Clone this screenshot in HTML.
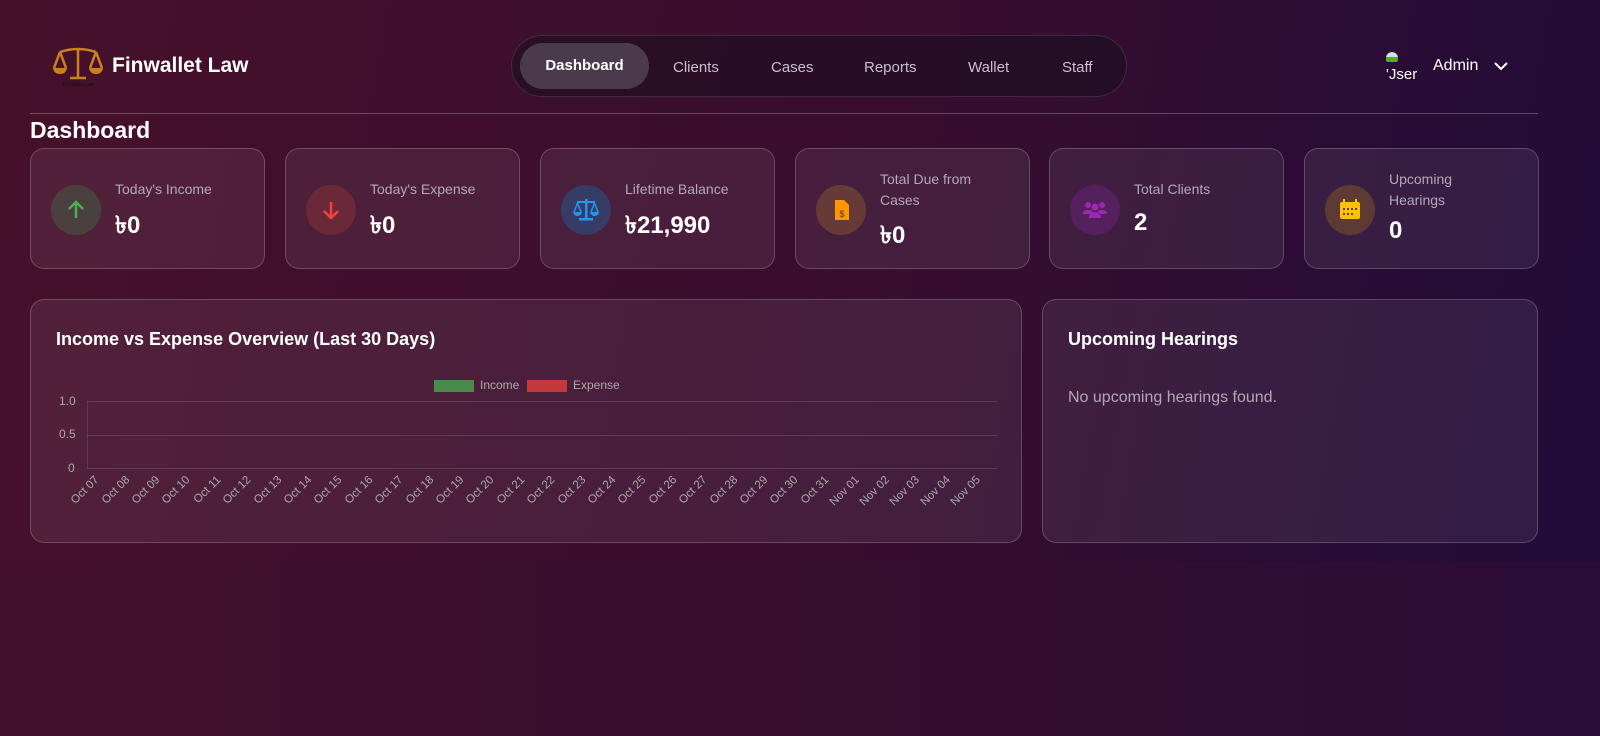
<!DOCTYPE html>
<html><head><meta charset="utf-8"><style>
*{box-sizing:border-box;margin:0;padding:0}
html,body{width:1600px;height:736px;overflow:hidden;font-family:"Liberation Sans",sans-serif;background:linear-gradient(90deg,#43102a,#2a0c36);}
.wrap{position:absolute;left:0;top:0;width:1600px;height:562px;background:linear-gradient(100deg,#461029 0%,#3a0d2f 50%,#210c38 100%);}
.logo{position:absolute;left:52px;top:44px}
.brand{position:absolute;left:112px;top:54px;color:#fff;font-weight:bold;font-size:21px}
.nav{position:absolute;left:511px;top:35px;width:616px;height:62px;border-radius:31px;background:rgba(25,15,30,.55);border:1px solid rgba(255,255,255,.12)}
.nav span{position:absolute;top:23px;color:#c9bfcf;font-size:15px}
.nav .act{left:8px;top:7px;width:129px;height:46px;border-radius:23px;background:#4a3a4c;color:#fff;font-weight:bold;text-align:center;line-height:46px}
.hr{position:absolute;left:30px;top:113px;width:1508px;height:1px;background:rgba(255,255,255,.25)}
h1{position:absolute;left:30px;top:117px;color:#fff;font-size:23px}
.card{position:absolute;top:148px;width:235px;height:121px;border-radius:14px;background:rgba(255,255,255,.07);border:1px solid rgba(255,255,255,.2)}
.ic{position:absolute;left:20px;top:36px;width:50px;height:50px;border-radius:25px}
.lb{position:absolute;left:84px;color:#b4a8b6;font-size:14px;line-height:21px}
.val{position:absolute;left:84px;color:#fff;font-weight:bold;font-size:24px}
.panel{position:absolute;top:299px;height:244px;border-radius:14px;background:rgba(255,255,255,.07);border:1px solid rgba(255,255,255,.2)}
.pt{position:absolute;left:25px;top:29px;color:#fff;font-size:18px;font-weight:bold}
.ax{position:absolute;color:#aaa;font-size:12px}
.xl{position:absolute;color:#aaa;font-size:11.5px;transform-origin:right top;transform:rotate(-45deg);white-space:nowrap}
</style></head><body>
<div class="wrap">
<svg class="logo" width="52" height="44" viewBox="0 0 52 44"><g stroke="#c9801f" stroke-width="2.5" fill="none"><path d="M26 4V34M8 8Q26 2 44 8M8 8 2 24M8 8 14 24M44 8 38 24M44 8 50 24M18 34H34"/></g><path d="M1 24h14q-1 6-7 6t-7-6zM37 24h14q-1 6-7 6t-7-6z" fill="#c9801f"/><text x="26" y="42" font-size="5" fill="#111" text-anchor="middle" font-family="Liberation Sans">FinWallet Law</text></svg>
<div class="brand">Finwallet Law</div>
<div class="nav"><span class="act">Dashboard</span><span style="left:161px">Clients</span><span style="left:259px">Cases</span><span style="left:352px">Reports</span><span style="left:456px">Wallet</span><span style="left:550px">Staff</span></div>
<div style="position:absolute;left:1386px;top:52px;width:12px;height:10px;border-radius:6px 6px 2px 2px;background:linear-gradient(#ddd 50%,#5a3 50%)"></div>
<div style="position:absolute;left:1386px;top:66px;color:#fff;font-size:15px">'Jser</div>
<div style="position:absolute;left:1433px;top:57px;color:#fff;font-size:16px">Admin</div>
<svg style="position:absolute;left:1494px;top:61px" width="14" height="10"><path d="M1 2l6 6 6-6" stroke="#fff" stroke-width="2" fill="none"/></svg>
<div class="hr"></div>
<h1>Dashboard</h1>

<div class="card" style="left:30px"><div class="ic" style="background:#4a4040"><svg width="50" height="50"><path d="M25 33V17M18 24l7-7 7 7" stroke="#4caf50" stroke-width="2.5" fill="none"/></svg></div><div class="lb" style="top:30px">Today's Income</div><div class="val" style="top:58px">৳0</div></div>
<div class="card" style="left:285px"><div class="ic" style="background:#6a2838"><svg width="50" height="50"><path d="M25 17V33M18 26l7 7 7-7" stroke="#f44336" stroke-width="2.5" fill="none"/></svg></div><div class="lb" style="top:30px">Today's Expense</div><div class="val" style="top:58px">৳0</div></div>
<div class="card" style="left:540px"><div class="ic" style="background:#363c66"><svg width="50" height="50" fill="#2196f3"><rect x="24" y="14" width="2.5" height="20"/><rect x="16" y="16" width="18" height="2"/><rect x="18" y="33" width="14" height="2.5"/><path d="M12 27h9q-1 4-4.5 4T12 27zM29 27h9q-1 4-4.5 4T29 27z"/><path d="M16.5 18 13 27M16.5 18 20 27M33.5 18 30 27M33.5 18 37 27" stroke="#2196f3" stroke-width="1.5"/></svg></div><div class="lb" style="top:30px">Lifetime Balance</div><div class="val" style="top:58px">৳21,990</div></div>
<div class="card" style="left:795px"><div class="ic" style="background:#663a36"><svg width="50" height="50"><path d="M19 15h9l5 5v15h-14z" fill="#ff9800"/><text x="26" y="32" font-size="9" fill="#5a2a10" text-anchor="middle" font-family="Liberation Sans">$</text></svg></div><div class="lb" style="top:20px">Total Due from<br>Cases</div><div class="val" style="top:68px">৳0</div></div>
<div class="card" style="left:1049px"><div class="ic" style="background:#55205e"><svg width="50" height="50" fill="#9c27b0"><circle cx="18" cy="20" r="3"/><circle cx="32" cy="20" r="3"/><circle cx="25" cy="22" r="3.5"/><path d="M13 29q0-4 5-4t4 2v2zM37 29q0-4-5-4t-4 2v2zM19 33q0-6 6-6t6 6z"/></svg></div><div class="lb" style="top:30px">Total Clients</div><div class="val" style="top:60px">2</div></div>
<div class="card" style="left:1304px"><div class="ic" style="background:#5e3a34"><svg width="50" height="50"><rect x="15" y="17" width="20" height="17" rx="2" fill="#ffc107"/><rect x="18" y="14" width="2" height="5" fill="#ffc107"/><rect x="30" y="14" width="2" height="5" fill="#ffc107"/><g fill="#6a3a20"><rect x="18" y="23" width="2" height="2"/><rect x="22" y="23" width="2" height="2"/><rect x="26" y="23" width="2" height="2"/><rect x="30" y="23" width="2" height="2"/><rect x="18" y="28" width="2" height="2"/><rect x="22" y="28" width="2" height="2"/><rect x="26" y="28" width="2" height="2"/></g></svg></div><div class="lb" style="top:20px">Upcoming<br>Hearings</div><div class="val" style="top:68px">0</div></div>

<div class="panel" style="left:30px;width:992px">
<div class="pt">Income vs Expense Overview (Last 30 Days)</div>
<div style="position:absolute;left:403px;top:80px;width:40px;height:12px;background:#4a8a4a"></div><div class="ax" style="left:449px;top:78px">Income</div>
<div style="position:absolute;left:496px;top:80px;width:40px;height:12px;background:#c43a3a"></div><div class="ax" style="left:542px;top:78px">Expense</div>
<div style="position:absolute;left:56px;top:101px;width:910px;height:1px;background:rgba(255,255,255,.12)"></div>
<div style="position:absolute;left:56px;top:135px;width:910px;height:1px;background:rgba(255,255,255,.12)"></div>
<div style="position:absolute;left:56px;top:168px;width:910px;height:1px;background:rgba(255,255,255,.12)"></div>
<div style="position:absolute;left:56px;top:101px;width:1px;height:68px;background:rgba(255,255,255,.1)"></div>
<div class="ax" style="left:28px;top:94px">1.0</div><div class="ax" style="left:28px;top:127px">0.5</div><div class="ax" style="left:37px;top:161px">0</div>
<div id="xl"></div>
</div>
<div class="panel" style="left:1042px;width:496px">
<div class="pt">Upcoming Hearings</div>
<div style="position:absolute;left:25px;top:89px;color:#b4a8b6;font-size:16px">No upcoming hearings found.</div>
</div>
</div>
<script>
var d=[];for(var i=7;i<=31;i++)d.push("Oct "+(i<10?"0"+i:i));for(i=1;i<=5;i++)d.push("Nov 0"+i);
var h="";d.forEach(function(t,i){var x=56+i*30.4+8;h+='<div class="xl" style="right:'+(992-x)+'px;top:174px">'+t+'</div>';});
document.getElementById("xl").outerHTML=h;
</script>
</body></html>
